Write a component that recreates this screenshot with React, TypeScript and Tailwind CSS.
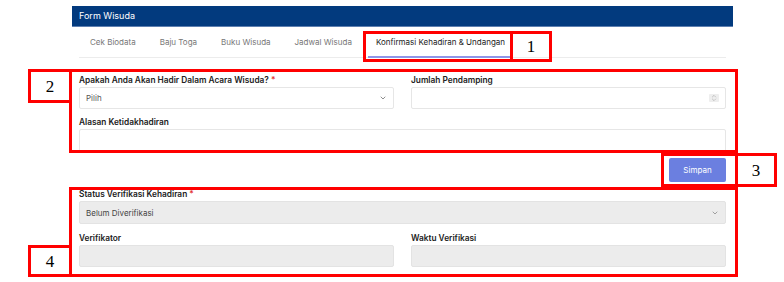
import { ChevronDown, ChevronsUpDown } from 'lucide-react';

const tabs = ['Cek Biodata', 'Baju Toga', 'Buku Wisuda', 'Jadwal Wisuda'];

function Label({ text, required }: { text: string; required?: boolean }) {
  return (
    <div className="text-[8.3px] font-semibold text-[#222] leading-[10px] mb-[2px]">
      {text}
      {required && <span className="text-[#e3342f]"> *</span>}
    </div>
  );
}

function Marker({ n }: { n: string }) {
  return (
    <span className="text-[17px] text-black leading-none" style={{ fontFamily: '"Liberation Serif", serif' }}>
      {n}
    </span>
  );
}

export default function App() {
  return (
    <div className="relative w-[784px] h-[282px] overflow-hidden bg-white" style={{ fontFamily: 'Inter, "Noto Sans", sans-serif' }}>
      <div className="ml-[72px] w-[661px] pt-[6px]">
        {/* header */}
        <div className="h-[21px] bg-[#023a7e] border-b border-[#5d7fb0] flex items-center pl-[7px] text-[9px] text-white">
          Form Wisuda
        </div>

        {/* tabs */}
        <div className="mx-[7px] h-[31px] flex items-stretch border-b border-[#ececec]">
          <div className="flex items-stretch pl-[3px]">
            {tabs.map((t) => (
              <div key={t} className="flex items-center px-[8px] mr-[8px] text-[8px] text-[#777]">
                {t}
              </div>
            ))}
            <div className="flex items-center px-[8px] text-[8px] text-[#222] border-b-2 border-[#8f96e8] -mb-px">
              Konfirmasi Kehadiran &amp; Undangan
            </div>
          </div>
        </div>

        {/* form */}
        <div className="px-[7px] pt-[17px]">
          <div className="grid grid-cols-2 gap-x-[17px]">
            <div>
              <Label text="Apakah Anda Akan Hadir Dalam Acara Wisuda?" required />
              <div className="h-[22px] border border-[#e6e6e6] rounded-[2px] flex items-center justify-between px-[6px] text-[8px] text-[#555]">
                Pilih
                <ChevronDown className="size-[8px] text-[#555]" strokeWidth={2} />
              </div>
            </div>
            <div>
              <Label text="Jumlah Pendamping" />
              <div className="h-[22px] border border-[#e6e6e6] rounded-[2px] flex items-center justify-end px-[6px]">
                <span className="bg-[#eeeeee] rounded-[1px] px-[1px]">
                  <ChevronsUpDown className="size-[8px] text-[#999]" strokeWidth={1.5} />
                </span>
              </div>
            </div>
          </div>

          <div className="mt-[8px]">
            <Label text="Alasan Ketidakhadiran" />
            <div className="h-[24px] border border-[#e6e6e6] rounded-[2px]" />
          </div>

          <div className="flex justify-end mt-[5px]">
            <button className="w-[57px] h-[24px] bg-[#6b7fe0] text-white text-[8px] rounded-[2px]">Simpan</button>
          </div>

          <div className="mt-[7px]">
            <Label text="Status Verifikasi Kehadiran" required />
            <div className="h-[23px] bg-[#ececec] border border-[#e3e3e3] rounded-[2px] flex items-center justify-between px-[6px] text-[8px] text-[#444]">
              Belum Diverifikasi
              <ChevronDown className="size-[8px] text-[#777]" strokeWidth={2} />
            </div>
          </div>

          <div className="grid grid-cols-2 gap-x-[17px] mt-[9px]">
            <div>
              <Label text="Verifikator" />
              <div className="h-[22px] bg-[#ececec] border border-[#e3e3e3] rounded-[2px]" />
            </div>
            <div>
              <Label text="Waktu Verifikasi" />
              <div className="h-[22px] bg-[#ececec] border border-[#e3e3e3] rounded-[2px]" />
            </div>
          </div>
        </div>
      </div>

      {/* annotation boxes */}
      <div className="absolute left-[363px] top-[31px] w-[150px] h-[31px] border-[3px] border-[#ff0000]" />
      <div className="absolute left-[510px] top-[31px] w-[42px] h-[31px] border-[3px] border-[#ff0000] flex items-center justify-center">
        <Marker n="1" />
      </div>
      <div className="absolute left-[69px] top-[69px] w-[669px] h-[84px] border-[3px] border-[#ff0000]" />
      <div className="absolute left-[28px] top-[69px] w-[44px] h-[34px] border-[3px] border-[#ff0000] flex items-center justify-center">
        <Marker n="2" />
      </div>
      <div className="absolute left-[661px] top-[153px] w-[77px] h-[34px] border-[3px] border-[#ff0000]" />
      <div className="absolute left-[735px] top-[153px] w-[42px] h-[34px] border-[3px] border-[#ff0000] flex items-center justify-center">
        <Marker n="3" />
      </div>
      <div className="absolute left-[69px] top-[187px] w-[669px] h-[90px] border-[3px] border-[#ff0000]" />
      <div className="absolute left-[28px] top-[245px] w-[44px] h-[32px] border-[3px] border-[#ff0000] flex items-center justify-center">
        <Marker n="4" />
      </div>
    </div>
  );
}
